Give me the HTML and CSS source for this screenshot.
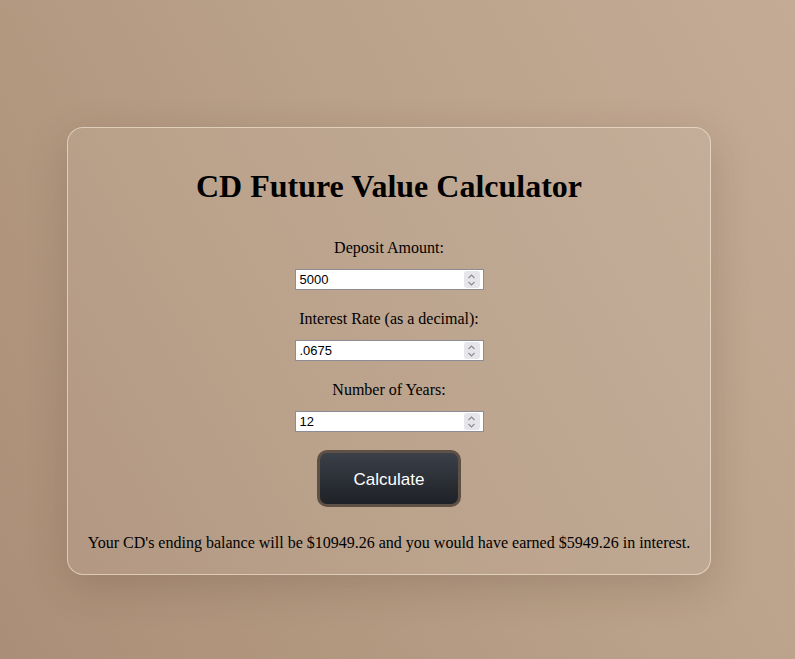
FILE: index.html
```html
<!DOCTYPE html>
<html>
<head>
<meta charset="utf-8">
<link rel="stylesheet" href="styles.css">
</head>
<body>
<div class="page">
  <div class="card">
    <h1 class="title">CD Future Value Calculator</h1>
    <div class="field">
      <label class="label">Deposit Amount:</label>
      <div class="numbox"><span class="val">5000</span><span class="spin"><svg width="9" height="14" viewBox="0 0 9 14"><path d="M1.5 5 L4.5 2 L7.5 5 M1.5 9 L4.5 12 L7.5 9" fill="none" stroke="#8a8a90" stroke-width="1.1"/></svg></span></div>
    </div>
    <div class="field">
      <label class="label">Interest Rate (as a decimal):</label>
      <div class="numbox"><span class="val">.0675</span><span class="spin"><svg width="9" height="14" viewBox="0 0 9 14"><path d="M1.5 5 L4.5 2 L7.5 5 M1.5 9 L4.5 12 L7.5 9" fill="none" stroke="#8a8a90" stroke-width="1.1"/></svg></span></div>
    </div>
    <div class="field">
      <label class="label">Number of Years:</label>
      <div class="numbox"><span class="val">12</span><span class="spin"><svg width="9" height="14" viewBox="0 0 9 14"><path d="M1.5 5 L4.5 2 L7.5 5 M1.5 9 L4.5 12 L7.5 9" fill="none" stroke="#8a8a90" stroke-width="1.1"/></svg></span></div>
    </div>
    <button class="btn">Calculate</button>
    <p class="result">Your CD's ending balance will be $10949.26 and you would have earned $5949.26 in interest.</p>
  </div>
</div>
</body>
</html>
```

FILE: styles.css
```css
html, body {
  margin: 0;
  padding: 0;
  height: 100%;
}
body {
  background: linear-gradient(60deg, #ab8e77 0%, #b9a088 55%, #c4ab96 100%);
  font-family: "Liberation Serif", "Times New Roman", serif;
  color: #000;
}
.page {
  padding: 127px 0 0 67px;
}
.card {
  box-sizing: border-box;
  width: 644px;
  height: 448px;
  border: 1px solid rgba(255, 240, 225, 0.55);
  border-radius: 16px;
  background: rgba(255, 255, 255, 0.07);
  box-shadow: 0 12px 40px rgba(60, 40, 25, 0.18);
  display: flex;
  flex-direction: column;
  align-items: center;
  padding-top: 40px;
}
.title {
  margin: 0;
  font-size: 32px;
  font-weight: bold;
  line-height: 37px;
  height: 37px;
}
.field {
  display: flex;
  flex-direction: column;
  align-items: center;
  margin-top: 34px;
}
.field + .field {
  margin-top: 20px;
}
.label {
  font-size: 16px;
  line-height: 18px;
  height: 18px;
  margin-bottom: 12px;
}
.numbox {
  box-sizing: border-box;
  width: 189px;
  height: 21px;
  background: #fff;
  border: 1px solid #8c8c98;
  display: flex;
  align-items: center;
  justify-content: space-between;
  padding: 0 3px 0 4px;
}
.val {
  font-family: "Liberation Sans", Arial, sans-serif;
  font-size: 13px;
  line-height: 15px;
}
.spin {
  width: 16px;
  height: 17px;
  background: #e5e5ea;
  border-radius: 3px;
  display: flex;
  align-items: center;
  justify-content: center;
}
.btn {
  margin-top: 18px;
  box-sizing: border-box;
  width: 144px;
  height: 57px;
  border: 3px solid #5f5046;
  border-radius: 10px;
  background: linear-gradient(180deg, #3b4049 0%, #1e2126 100%);
  color: #fff;
  font-family: "Liberation Sans", Arial, sans-serif;
  font-size: 17px;
  padding: 2px 0 0;
}
.result {
  margin: 27px 0 0;
  font-size: 16px;
  line-height: 18px;
}
```
